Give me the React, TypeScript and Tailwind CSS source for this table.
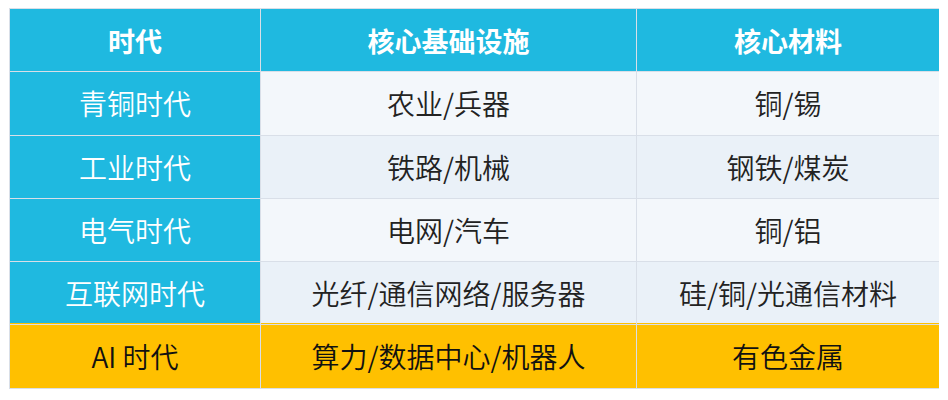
const rows = [
  { era: '青铜时代', infra: '农业/兵器', material: '铜/锡' },
  { era: '工业时代', infra: '铁路/机械', material: '钢铁/煤炭' },
  { era: '电气时代', infra: '电网/汽车', material: '铜/铝' },
  { era: '互联网时代', infra: '光纤/通信网络/服务器', material: '硅/铜/光通信材料' },
];

export default function App() {
  return (
    <div className="w-[948px] h-[400px] bg-white pt-2 pl-[9px]" style={{ fontFamily: '"Noto Sans CJK SC", "Noto Sans", sans-serif' }}>
      <div className="grid w-[930px] grid-cols-[250px_375px_302px] gap-px bg-[#d9dfe8] p-px text-[28px] font-[350] leading-none">
        {['时代', '核心基础设施', '核心材料'].map((h) => (
          <div key={h} className="flex h-[62.25px] items-center justify-center bg-[#1fb9e0] text-[27px] font-bold text-white">
            {h}
          </div>
        ))}

        {rows.map((r, i) => {
          const bg = i % 2 === 1 ? 'bg-[#eaf1f8]' : 'bg-[#f3f7fb]';
          const last = i === rows.length - 1;
          return [
            <div key={r.era} className={`flex h-[62.25px] items-center justify-center bg-[#1fb9e0] text-white ${last ? 'border-b border-[#ffc000]' : ''}`}>
              {r.era}
            </div>,
            <div key={r.infra} className={`flex h-[62.25px] items-center justify-center ${bg} text-[#222] ${last ? 'border-b border-[#ffc000]' : ''}`}>
              {r.infra}
            </div>,
            <div key={r.material} className={`flex h-[62.25px] items-center justify-center ${bg} text-[#222] ${last ? 'border-b border-[#ffc000]' : ''}`}>
              {r.material}
            </div>,
          ];
        })}

        <div className="flex h-[62.25px] items-center justify-center bg-[#ffc000] text-[#111]">AI 时代</div>
        <div className="flex h-[62.25px] items-center justify-center bg-[#ffc000] text-[#111]">算力/数据中心/机器人</div>
        <div className="flex h-[62.25px] items-center justify-center bg-[#ffc000] text-[#111]">有色金属</div>
      </div>
    </div>
  );
}
